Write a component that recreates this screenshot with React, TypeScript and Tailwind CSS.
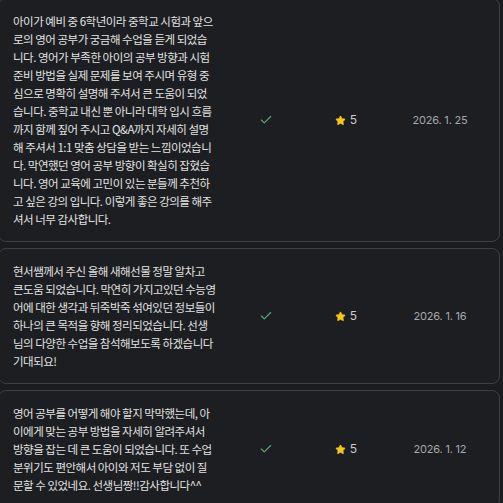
import { Check, Star } from 'lucide-react';

interface Review {
    lines: string[];
    rating: number;
    date: string;
}

// Lines are kept as they wrap in the table column
const reviews: Review[] = [
    {
        lines: [
            '아이가 예비 중 6학년이라 중학교 시험과 앞으',
            '로의 영어 공부가 궁금해 수업을 듣게 되었습',
            '니다. 영어가 부족한 아이의 공부 방향과 시험',
            '준비 방법을 실제 문제를 보여 주시며 유형 중',
            '심으로 명확히 설명해 주셔서 큰 도움이 되었',
            '습니다. 중학교 내신 뿐 아니라 대학 입시 흐름',
            '까지 함께 짚어 주시고 Q&A까지 자세히 설명',
            '해 주셔서 1:1 맞춤 상담을 받는 느낌이었습니',
            '다. 막연했던 영어 공부 방향이 확실히 잡혔습',
            '니다. 영어 교육에 고민이 있는 분들께 추천하',
            '고 싶은 강의 입니다. 이렇게 좋은 강의를 해주',
            '셔서 너무 감사합니다.',
        ],
        rating: 5,
        date: '2026. 1. 25',
    },
    {
        lines: [
            '현서쌤께서 주신 올해 새해선물 정말 알차고',
            '큰도움 되었습니다. 막연히 가지고있던 수능영',
            '어에 대한 생각과 뒤죽박죽 섞여있던 정보들이',
            '하나의 큰 목적을 향해 정리되었습니다. 선생',
            '님의 다양한 수업을 참석해보도록 하겠습니다',
            '기대되요!',
        ],
        rating: 5,
        date: '2026. 1. 16',
    },
    {
        lines: [
            '영어 공부를 어떻게 해야 할지 막막했는데, 아',
            '이에게 맞는 공부 방법을 자세히 알려주셔서',
            '방향을 잡는 데 큰 도움이 되었습니다. 또 수업',
            '분위기도 편안해서 아이와 저도 부담 없이 질',
            '문할 수 있었네요. 선생님짱!!감사합니다^^',
        ],
        rating: 5,
        date: '2026. 1. 12',
    },
];

const ReviewRow = ({ review }: { review: Review }) => (
    <div className="flex items-center rounded-lg border border-[#3b3e42] bg-[#1c1e21] pl-[14px] pr-[20px] py-[13px]">
        <div className="w-[228px] shrink-0 text-[11.5px] leading-[18px] tracking-[-0.5px] text-[#e2e2e2]">
            {review.lines.map((line, i) => (
                <p key={i} className="whitespace-nowrap">{line}</p>
            ))}
        </div>
        <div className="w-[50px] flex justify-center">
            <Check className="w-[14px] h-[14px] text-[#5aa776]" strokeWidth={2} />
        </div>
        <div className="w-[110px] flex items-center justify-center gap-[4px]">
            <Star className="w-[11px] h-[11px] text-[#f5c518] fill-[#f5c518]" strokeWidth={1.5} />
            <span className="text-[12px] text-[#c9cbce] font-['Inter',sans-serif]">{review.rating}</span>
        </div>
        <div className="flex-1 text-center text-[11px] tracking-[-0.2px] text-[#a4a7ac] font-['Inter',sans-serif]">
            {review.date}
        </div>
    </div>
);

export default function App() {
    return (
        <div
            className="w-[503px] h-[503px] overflow-hidden bg-[#1a1c1f]"
            style={{ fontFamily: '"Noto Sans CJK KR", "Noto Sans", sans-serif' }}
        >
            <div className="-mt-[2px] -ml-[2px] w-[502px] flex flex-col gap-[6px]">
                {reviews.map((r) => (
                    <ReviewRow key={r.date} review={r} />
                ))}
            </div>
        </div>
    );
}
